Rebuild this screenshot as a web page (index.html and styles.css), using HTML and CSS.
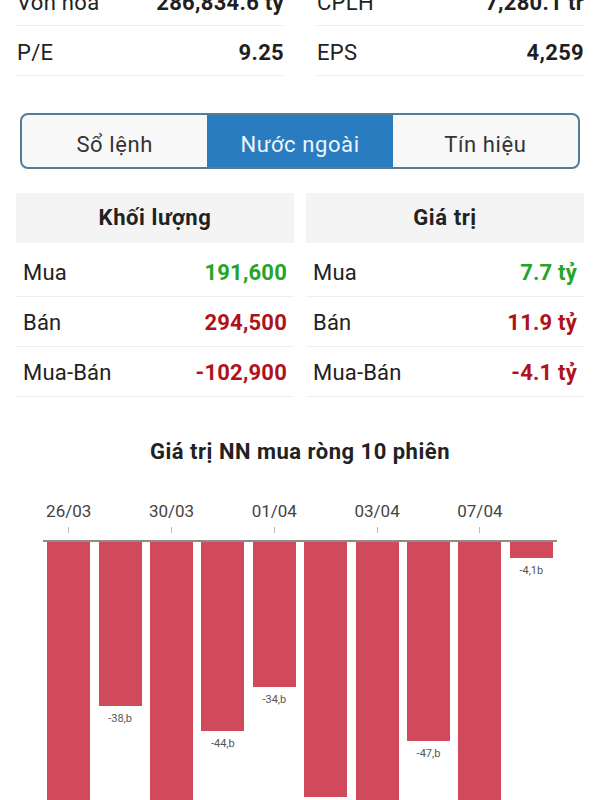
FILE: index.html
```html
<!DOCTYPE html>
<html lang="vi">
<head>
<meta charset="utf-8">
<title>Nước ngoài</title>
<link rel="stylesheet" href="styles.css">
</head>
<body>
<div class="stats">
  <div class="stat"><span class="label">Vốn hóa</span><span class="val">286,834.6 tỷ</span></div>
  <div class="stat"><span class="label">CPLH</span><span class="val">7,280.1 tr</span></div>
  <div class="stat"><span class="label">P/E</span><span class="val">9.25</span></div>
  <div class="stat"><span class="label">EPS</span><span class="val">4,259</span></div>
</div>

<div class="tabs">
  <div class="tab">Sổ lệnh</div>
  <div class="tab active">Nước ngoài</div>
  <div class="tab">Tín hiệu</div>
</div>

<div class="tables">
  <div class="panel">
    <div class="phead">Khối lượng</div>
    <div class="row"><span>Mua</span><span class="v up">191,600</span></div>
    <div class="row"><span>Bán</span><span class="v down">294,500</span></div>
    <div class="row"><span>Mua-Bán</span><span class="v down">-102,900</span></div>
  </div>
  <div class="panel">
    <div class="phead">Giá trị</div>
    <div class="row"><span>Mua</span><span class="v up">7.7 tỷ</span></div>
    <div class="row"><span>Bán</span><span class="v down">11.9 tỷ</span></div>
    <div class="row"><span>Mua-Bán</span><span class="v down">-4.1 tỷ</span></div>
  </div>
</div>

<div class="chart-title">Giá trị NN mua ròng 10 phiên</div>

<div class="chart">
  <div class="dates">
    <span>26/03</span><span></span><span>30/03</span><span></span><span>01/04</span><span></span><span>03/04</span><span></span><span>07/04</span><span></span>
  </div>
  <div class="ticks">
    <span class="tick"></span><span></span><span class="tick"></span><span></span><span class="tick"></span><span></span><span class="tick"></span><span></span><span class="tick"></span><span></span>
  </div>
  <div class="axis"></div>
  <div class="bars">
    <div class="col"><div class="bar" style="height:320px"></div></div>
    <div class="col"><div class="bar" style="height:164px"></div><div class="blabel">-38,b</div></div>
    <div class="col"><div class="bar" style="height:320px"></div></div>
    <div class="col"><div class="bar" style="height:189px"></div><div class="blabel">-44,b</div></div>
    <div class="col"><div class="bar" style="height:145px"></div><div class="blabel">-34,b</div></div>
    <div class="col"><div class="bar" style="height:255px"></div><div class="blabel">-59,b</div></div>
    <div class="col"><div class="bar" style="height:320px"></div></div>
    <div class="col"><div class="bar" style="height:199px"></div><div class="blabel">-47,b</div></div>
    <div class="col"><div class="bar" style="height:320px"></div></div>
    <div class="col"><div class="bar" style="height:16px"></div><div class="blabel">-4,1b</div></div>
  </div>
</div>
</body>
</html>
```

FILE: styles.css
```css
html, body {
  margin: 0;
  padding: 0;
  background: #ffffff;
  overflow: hidden;
  height: 800px;
}
body {
  padding: 0 16px;
  font-family: Roboto, "Noto Sans", "Liberation Sans", sans-serif;
  color: #222222;
}

.stats {
  display: grid;
  grid-template-columns: 1fr 1fr;
  column-gap: 32px;
  margin-top: -24px;
}
.stat {
  display: flex;
  justify-content: space-between;
  box-sizing: border-box;
  height: 50px;
  padding-top: 3px;
  line-height: 47px;
  font-size: 22px;
  letter-spacing: 0.3px;
  border-bottom: 1px solid #efefef;
}
.stat .label { padding-left: 1px; }
.stat .val { font-weight: 700; color: #1f1f1f; }

.tabs {
  display: flex;
  margin: 37px 4px 0;
  height: 56px;
  box-sizing: border-box;
  border: 2px solid #557c96;
  border-radius: 8px;
  overflow: hidden;
  background: #f8f8f8;
}
.tab {
  flex: 1;
  display: flex;
  align-items: center;
  justify-content: center;
  padding-top: 6px;
  font-size: 22px;
  letter-spacing: 0.6px;
  color: #333333;
}
.tab.active {
  background: #2a7cc0;
  color: #eef4fa;
}

.tables {
  display: grid;
  grid-template-columns: 1fr 1fr;
  column-gap: 12px;
  margin-top: 24px;
}
.phead {
  height: 50px;
  line-height: 50px;
  background: #f4f4f4;
  text-align: center;
  font-size: 22px;
  letter-spacing: 0.6px;
  font-weight: 700;
  color: #222222;
  margin-bottom: 4px;
}
.row {
  display: flex;
  justify-content: space-between;
  box-sizing: border-box;
  height: 50px;
  padding: 2px 7px 0 7px;
  line-height: 47px;
  font-size: 22px;
  letter-spacing: 0.2px;
  border-bottom: 1px solid #efefef;
}
.v { font-weight: 700; }
.up { color: #24a527; }
.down { color: #b0121b; }

.chart-title {
  margin-top: 40px;
  line-height: 30px;
  text-align: center;
  font-size: 22px;
  letter-spacing: 0.5px;
  font-weight: 700;
  color: #222222;
}

.chart {
  margin: 0 27px;
}
.dates, .ticks, .bars {
  display: grid;
  grid-template-columns: repeat(10, 1fr);
}
.dates {
  margin-top: 34px;
  line-height: 20px;
  height: 20px;
  font-size: 17px;
  color: #444444;
}
.dates span {
  text-align: center;
  white-space: nowrap;
}
.ticks {
  margin-top: 6px;
  height: 6px;
}
.ticks span {
  display: flex;
  justify-content: center;
}
.tick::before {
  content: "";
  width: 1px;
  height: 6px;
  background: #b8b8b8;
}
.axis {
  margin-top: 7px;
  height: 2px;
  background: #8c8c8c;
}
.col {
  display: flex;
  flex-direction: column;
  align-items: center;
}
.bar {
  width: 43px;
  background: #d04a5b;
}
.blabel {
  margin-top: 6px;
  line-height: 14px;
  font-size: 11px;
  color: #555555;
}
```
